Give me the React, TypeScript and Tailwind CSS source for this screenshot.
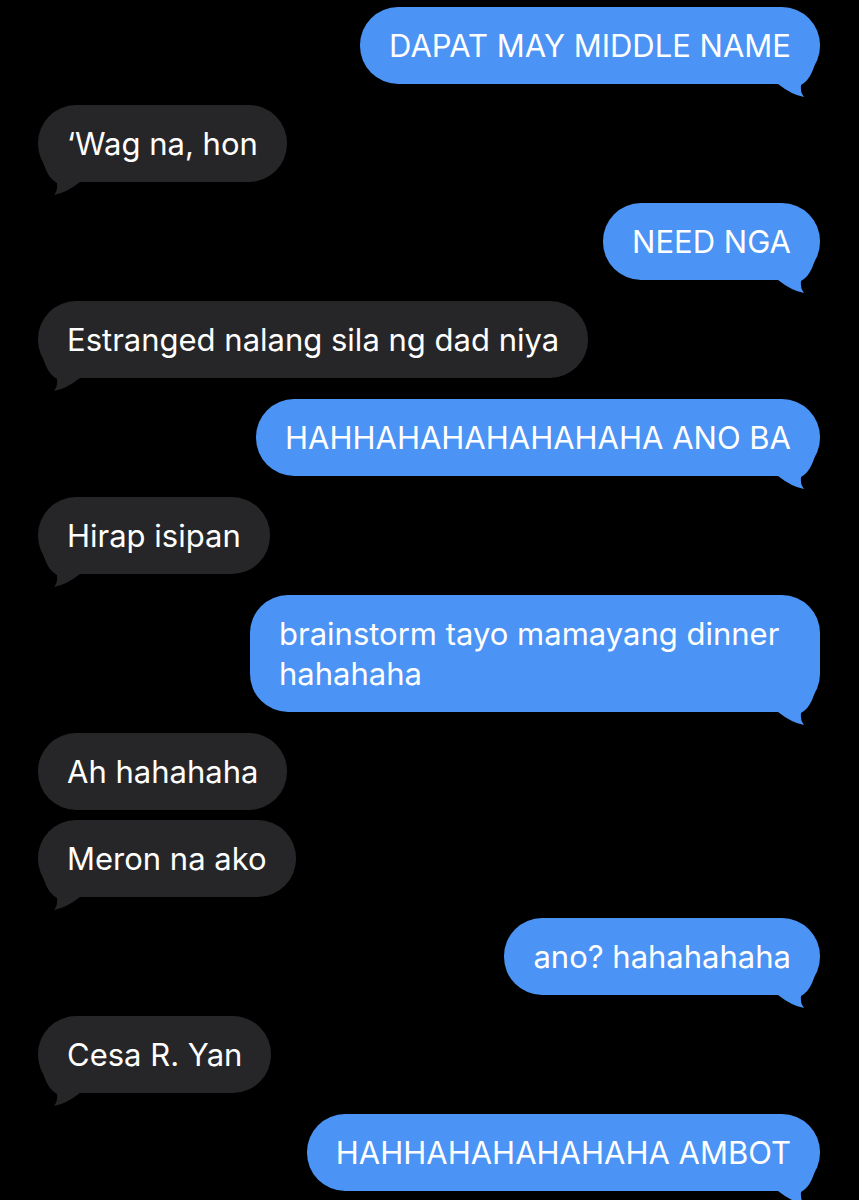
import React from 'react'

type Msg = { text: string; me: boolean; tail: boolean }

const messages: Msg[] = [
  { text: 'DAPAT MAY MIDDLE NAME', me: true, tail: true },
  { text: '‘Wag na, hon', me: false, tail: true },
  { text: 'NEED NGA', me: true, tail: true },
  { text: 'Estranged nalang sila ng dad niya', me: false, tail: true },
  { text: 'HAHHAHAHAHAHAHAHA ANO BA', me: true, tail: true },
  { text: 'Hirap isipan', me: false, tail: true },
  { text: 'brainstorm tayo mamayang dinner hahahaha', me: true, tail: true },
  { text: 'Ah hahahaha', me: false, tail: false },
  { text: 'Meron na ako', me: false, tail: true },
  { text: 'ano? hahahahaha', me: true, tail: true },
  { text: 'Cesa R. Yan', me: false, tail: true },
  { text: 'HAHHAHAHAHAHAHA AMBOT', me: true, tail: true },
]

// little hook under the bubble corner
const Tail = ({ me }: { me: boolean }) => (
  <svg
    width="45"
    height="40"
    viewBox="0 0 45 40"
    className={`absolute bottom-[-13px] ${me ? 'right-0' : 'left-0 -scale-x-100'}`}
  >
    <path
      d="M5 17 L41 2 Q37 22 26 28 Q25 35 29 40 Q17 38 3 27 Z"
      fill={me ? '#4b93f4' : '#262628'}
    />
  </svg>
)

const Bubble = ({ msg }: { msg: Msg }) => (
  <div className={`flex ${msg.me ? 'justify-end' : 'justify-start'} ${msg.tail ? 'mb-[21px]' : 'mb-[10px]'}`}>
    <div
      className={`relative max-w-[570px] rounded-[38px] px-[29px] py-[18.5px] text-[31px] leading-[40px] text-white ${
        msg.me ? 'bg-[#4b93f4]' : 'bg-[#262628]'
      }`}
    >
      {msg.tail && <Tail me={msg.me} />}
      <span className="relative">{msg.text}</span>
    </div>
  </div>
)

const App = () => {
  return (
    <div className="min-h-screen w-[859px] overflow-hidden bg-black pt-[7px] pl-[38px] pr-[39px] font-['Inter','Liberation_Sans',sans-serif]">
      {messages.map((m, i) => (
        <Bubble key={i} msg={m} />
      ))}
    </div>
  )
}

export default App
